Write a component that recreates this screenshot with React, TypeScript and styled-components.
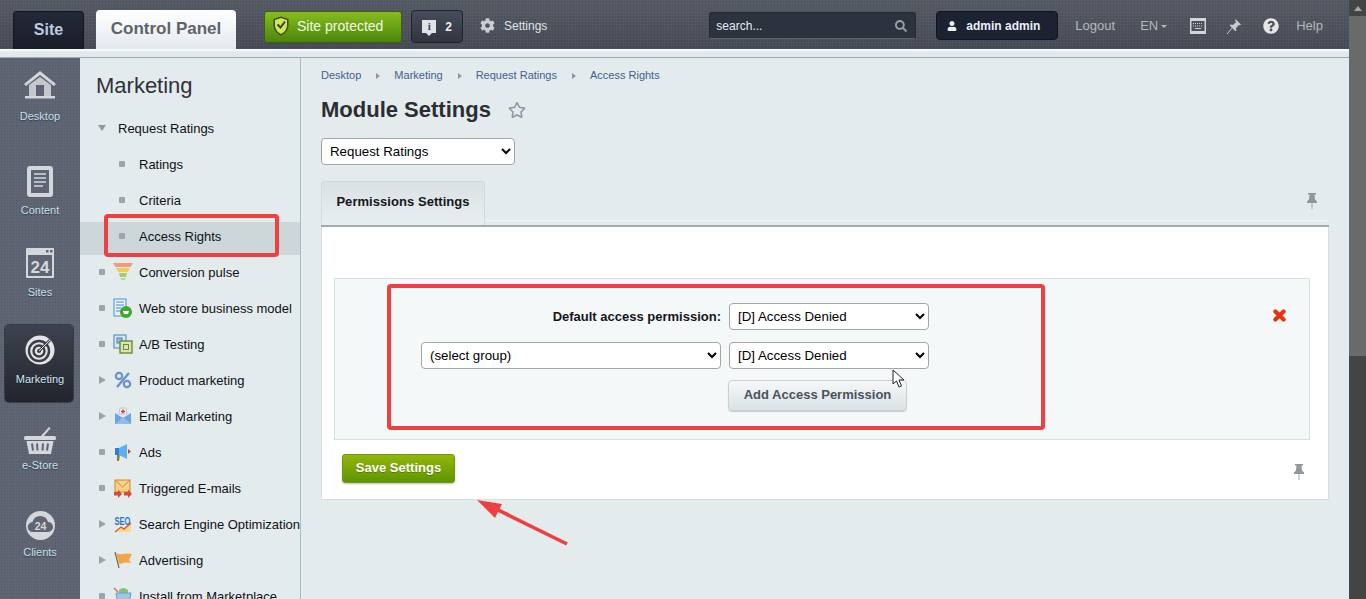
import styled, { createGlobalStyle } from 'styled-components'
import { FaUser, FaSearch, FaCog, FaQuestionCircle, FaRegStar } from 'react-icons/fa'

const GlobalStyle = createGlobalStyle`
  html, body {
    margin: 0;
    height: 100%;
    overflow: hidden;
    font-family: "Liberation Sans", Arial, sans-serif;
  }
  #root { height: 100%; }
`

const HomeIcon = () => (
  <svg width="34" height="30" viewBox="0 0 34 30">
    <path d="M17 1 L33 14 L31 16 L17 5 L3 16 L1 14 Z" fill="#d3d6da" />
    <path d="M6 15 L17 7 L28 15 V26 H21 V15 H13 V26 H6 Z" fill="#c4c7cc" />
    <rect x="2" y="26" width="30" height="2.5" fill="#d3d6da" />
  </svg>
)
const DocIcon = () => (
  <svg width="28" height="33" viewBox="0 0 28 33">
    <rect x="1" y="1" width="26" height="31" rx="3" fill="#d4d7db" />
    <rect x="5" y="5" width="18" height="23" fill="#5f6573" />
    <path d="M8 9h12M8 13h12M8 17h12M8 21h9" stroke="#d4d7db" strokeWidth="1.6" />
  </svg>
)
const CalIcon = () => (
  <svg width="28" height="30" viewBox="0 0 28 30">
    <rect width="28" height="30" rx="1" fill="#d4d7db" />
    <rect x="2" y="7" width="24" height="21" fill="#5f6573" />
    <rect x="20" y="2" width="2.5" height="2.5" fill="#5f6573" />
    <rect x="24" y="2" width="2.5" height="2.5" fill="#5f6573" />
    <text x="14" y="25" fontFamily="Liberation Sans" fontWeight="700" fontSize="17" textAnchor="middle" fill="#d4d7db">24</text>
  </svg>
)
const TargetIcon = () => (
  <svg width="30" height="30" viewBox="0 0 30 30">
    <circle cx="15" cy="15" r="14.5" fill="#e4e4e4" />
    <circle cx="14" cy="16" r="10" fill="none" stroke="#3a3e48" strokeWidth="2.4" />
    <circle cx="14" cy="16" r="5.5" fill="none" stroke="#3a3e48" strokeWidth="2.4" />
    <circle cx="14" cy="16" r="2" fill="#3a3e48" />
    <path d="M14 16 L25 5" stroke="#3a3e48" strokeWidth="2.6" />
    <path d="M14 16 L25 5" stroke="#e4e4e4" strokeWidth="1" />
  </svg>
)
const BasketIcon = () => (
  <svg width="32" height="29" viewBox="0 0 32 29">
    <path d="M16 11 L25 1 L26.5 2.2 L19 11" fill="#d4d7db" />
    <rect y="10" width="32" height="4" rx="1.5" fill="#d4d7db" />
    <path d="M2.5 15 H29.5 L27 28 H5 Z" fill="#d4d7db" />
    <path d="M8 17.5l1 7M13 17.5l.5 7M19 17.5l-.5 7M24 17.5l-1 7" stroke="#5f6573" strokeWidth="2" />
  </svg>
)
const CloudIcon = () => (
  <svg width="29" height="29" viewBox="0 0 29 29">
    <circle cx="14.5" cy="14.5" r="14.5" fill="#d4d7db" />
    <path d="M7 21 a5 5 0 0 1 -.5 -10 a8 8 0 0 1 15.5 0 a5 5 0 0 1 0 10 Z" fill="#5f6573" />
    <text x="14.5" y="19" fontFamily="Liberation Sans" fontWeight="700" fontSize="10.5" textAnchor="middle" fill="#d4d7db">24</text>
  </svg>
)

const FunnelIcon = () => (
  <svg width="20" height="20" viewBox="0 0 20 20">
    <path d="M0 1 H20 L17.5 5 H2.5 Z" fill="#f09a80" />
    <path d="M3 6 H17 L14.5 10 H5.5 Z" fill="#f3c75c" />
    <path d="M6 11 H14 L13 15 H7 Z" fill="#a6cf62" />
    <path d="M7.5 16 H12.5 L12 18 H8 Z" fill="#b9d6a0" />
  </svg>
)
const StoreIcon = () => (
  <svg width="20" height="20" viewBox="0 0 20 20">
    <rect x="1" y="1" width="12" height="17" fill="#e9f3fb" stroke="#3f8fd6" />
    <path d="M3 4h8M3 7h8M3 10h5M3 13h5" stroke="#3f8fd6" />
    <circle cx="13" cy="14" r="6" fill="#43a82f" />
    <path d="M10 13h6l-1 3h-4Z" fill="#fff" />
  </svg>
)
const AbIcon = () => (
  <svg width="20" height="20" viewBox="0 0 20 20">
    <rect x="1" y="1" width="12" height="13" fill="#d7e7f6" stroke="#4a7fb8" />
    <rect x="4" y="4" width="5" height="5" fill="#9ec0e2" stroke="#4a7fb8" />
    <rect x="7" y="7" width="12" height="12" fill="#dbe3b8" stroke="#6d8a2e" strokeWidth="1.4" />
    <rect x="10.5" y="10.5" width="5" height="5" fill="none" stroke="#6d8a2e" />
  </svg>
)
const PercentIcon = () => (
  <svg width="18" height="18" viewBox="0 0 18 18">
    <circle cx="5" cy="5" r="3.2" fill="none" stroke="#6c93c8" strokeWidth="2.2" />
    <circle cx="13" cy="13" r="3.2" fill="none" stroke="#6c93c8" strokeWidth="2.2" />
    <path d="M15 2 L3 16" stroke="#6c93c8" strokeWidth="2.4" />
  </svg>
)
const MailIcon = () => (
  <svg width="18" height="18" viewBox="0 0 18 18">
    <path d="M6 1h6l1 6H5Z" fill="#f4f4f4" stroke="#b9c6d4" />
    <path d="M9 2.5v4M7 4.5h4" stroke="#e0352a" strokeWidth="1.4" />
    <path d="M1 6 L9 11 L17 6 V17 H1 Z" fill="#6aa5e0" />
    <path d="M1 17 L9 10 L17 17" fill="#8fbdea" />
  </svg>
)
const MegaphoneIcon = () => (
  <svg width="18" height="20" viewBox="0 0 18 20">
    <path d="M3 12 L6 12 L5 19 H3 Z" fill="#9a7a2e" />
    <rect x="1" y="6" width="4" height="7" fill="#2f7fd0" />
    <path d="M5 6 L13 2 V17 L5 13 Z" fill="#5cb0ee" />
    <path d="M14 7 L17 9.5 L14 12 Z" fill="#e0352a" />
  </svg>
)
const TriggerIcon = () => (
  <svg width="19" height="19" viewBox="0 0 19 19">
    <rect x="1" y="1" width="15" height="12" fill="#f6d08a" stroke="#d08a36" />
    <path d="M1 1 L8.5 8 L16 1" fill="none" stroke="#d08a36" />
    <path d="M0 13h4v-2.5l4 4.5-4 4v-2.5H0Z" fill="#dc4a32" />
    <path d="M10 13h4v-2.5l4 4.5-4 4v-2.5h-4Z" fill="#dc4a32" />
  </svg>
)
const SeoIcon = () => (
  <svg width="18" height="18" viewBox="0 0 18 18">
    <path d="M1 17 L7 12 L10 14 L17 8 V17 Z" fill="#f6d98c" />
    <path d="M1 17 L7 12 L10 14 L17 8" fill="none" stroke="#dc5a28" strokeWidth="1.4" />
    <text x="0.5" y="10" fontFamily="Liberation Sans" fontWeight="700" fontSize="10" fill="#2f74c4" textLength="16" lengthAdjust="spacingAndGlyphs">SEO</text>
  </svg>
)
const FlagIcon = () => (
  <svg width="18" height="18" viewBox="0 0 18 18">
    <path d="M1 1 L5 17" stroke="#6e6a5e" strokeWidth="1.2" />
    <path d="M2 2 Q7 4 9 3 T18 3 L15 9 L17 12 Q11 11 9 12 T5 13 Z" fill="#f2a64a" />
  </svg>
)
const MarketIcon = () => (
  <svg width="20" height="20" viewBox="0 0 20 20">
    <path d="M1 2 L5 6" stroke="#d8706a" strokeWidth="1.6" />
    <path d="M6 4 Q10 0 15 4 V7 H6 Z" fill="#8fbf70" />
    <path d="M3 7 H18 L16 18 H5 Z" fill="#9cc7e8" stroke="#6a9cc6" />
  </svg>
)

const ShieldIcon = () => (
  <svg width="16" height="20" viewBox="0 0 16 20">
    <path d="M8 .5 L15.5 3 V10 Q15 16 8 19.5 Q1 16 .5 10 V3 Z" fill="#3e4a1c" />
    <path d="M8 2 L14 4 V10 Q13.5 15 8 18 Q2.5 15 2 10 V4 Z" fill="#cfe85a" />
    <path d="M4.5 8.5 L7.5 11.5 L12 5.5" fill="none" stroke="#39451a" strokeWidth="2" />
  </svg>
)

const KeyboardIcon = () => (
  <svg width="16" height="16" viewBox="0 0 16 16">
    <rect width="16" height="16" fill="#d2d4d6" />
    <rect x="1.5" y="3" width="13" height="10" fill="#4c515b" />
    <path d="M3 5.5h10M3 8h10" stroke="#d2d4d6" strokeDasharray="1 1" />
    <path d="M5 10.5h6" stroke="#d2d4d6" />
  </svg>
)

const SlantPinIcon = () => (
  <svg width="16" height="17" viewBox="0 0 16 17">
    <path d="M1 16 L6.5 9.5" stroke="#c6c9ce" strokeWidth="1" />
    <path d="M9.5 1 L15 6.5 L13.8 7.6 L12.8 7 L10 10.3 L10.4 12.5 L9.4 13.3 L3.7 7.6 L4.6 6.6 L6.8 7 L10 4.2 L9.2 2.6 Z" fill="#c6c9ce" />
  </svg>
)

const PinIcon = () => (
  <svg width="10" height="16" viewBox="0 0 10 16">
    <path d="M5 10 V16" stroke="#a2a9ae" strokeWidth="1" />
    <path d="M1 0 H9 V1.5 H7.5 L8 6.5 L10 8.5 V10 H0 V8.5 L2 6.5 L2.5 1.5 H1 Z" fill="#8f979d" />
  </svg>
)

const DeleteIcon = () => (
  <svg width="13" height="13" viewBox="0 0 13 13">
    <path d="M2.4 2.4 L10.6 10.6 M10.6 2.4 L2.4 10.6" stroke="#e8330f" strokeWidth="4.2" strokeLinecap="round" />
  </svg>
)

const railItems = [
  { label: 'Desktop', icon: <HomeIcon />, mt: 7, gap: 4 },
  { label: 'Content', icon: <DocIcon />, mt: 38, gap: 2 },
  { label: 'Sites', icon: <CalIcon />, mt: 26, gap: 2 },
  { label: 'Marketing', icon: <TargetIcon />, mt: 26, gap: 2, active: true },
  { label: 'e-Store', icon: <BasketIcon />, mt: 18, gap: -2 },
  { label: 'Clients', icon: <CloudIcon />, mt: 33, gap: 0 },
]

const menuItems = [
  { label: 'Conversion pulse', icon: <FunnelIcon /> },
  { label: 'Web store business model', icon: <StoreIcon /> },
  { label: 'A/B Testing', icon: <AbIcon /> },
  { label: 'Product marketing', icon: <PercentIcon />, arrow: true },
  { label: 'Email Marketing', icon: <MailIcon />, arrow: true },
  { label: 'Ads', icon: <MegaphoneIcon /> },
  { label: 'Triggered E-mails', icon: <TriggerIcon /> },
  { label: 'Search Engine Optimization', icon: <SeoIcon />, arrow: true },
  { label: 'Advertising', icon: <FlagIcon />, arrow: true },
  { label: 'Install from Marketplace', icon: <MarketIcon /> },
]

const crumbs = ['Desktop', 'Marketing', 'Request Ratings', 'Access Rights']

export default function App() {
  return (
    <Screen>
      <GlobalStyle />
      <Page>
        <Header>
          <SiteTab>Site</SiteTab>
          <PanelTab>Control Panel</PanelTab>
          <ProtectedButton>
            <ShieldIcon />
            Site protected
          </ProtectedButton>
          <NotifyButton>
            <NotifyGlyph>i</NotifyGlyph>2
          </NotifyButton>
          <SettingsLink>
            <FaCog size={15} color="#c9ccd0" />
            Settings
          </SettingsLink>
          <Search>
            search...
            <FaSearch size={12} color="#9a9ea5" />
          </Search>
          <UserBox>
            <FaUser size={10} color="#f0f0f0" />
            admin admin
          </UserBox>
          <HeadLink $ml={17}>Logout</HeadLink>
          <HeadLink $ml={25}>
            EN <Caret />
          </HeadLink>
          <HeadIcon $ml={23}>
            <KeyboardIcon />
          </HeadIcon>
          <HeadIcon $ml={20}>
            <SlantPinIcon />
          </HeadIcon>
          <HeadIcon $ml={21}>
            <FaQuestionCircle size={16} color="#e6e6e6" />
          </HeadIcon>
          <HeadLink $ml={17}>Help</HeadLink>
        </Header>
        <SubBand />
        <Body>
          <Rail>
            {railItems.map((item) => (
              <RailItem key={item.label} $mt={item.mt} $active={item.active}>
                <RailIcon>{item.icon}</RailIcon>
                <RailLabel $gap={item.gap} $active={item.active}>
                  {item.label}
                </RailLabel>
              </RailItem>
            ))}
          </Rail>
          <Sidebar>
            <SidebarTitle>Marketing</SidebarTitle>
            <MenuRow $pad={18}>
              <DownTriangle />
              <MenuLabel $ml={12}>Request Ratings</MenuLabel>
            </MenuRow>
            <MenuRow $pad={39}>
              <Bullet />
              <MenuLabel $ml={14}>Ratings</MenuLabel>
            </MenuRow>
            <MenuRow $pad={39}>
              <Bullet />
              <MenuLabel $ml={14}>Criteria</MenuLabel>
            </MenuRow>
            <MenuRow $pad={39} $selected>
              <Bullet />
              <MenuLabel $ml={14}>Access Rights</MenuLabel>
              <RedMark />
            </MenuRow>
            {menuItems.map((item) => (
              <MenuRow key={item.label} $pad={19}>
                {item.arrow ? <RightTriangle /> : <Bullet />}
                <MenuIcon>{item.icon}</MenuIcon>
                <MenuLabel>{item.label}</MenuLabel>
              </MenuRow>
            ))}
          </Sidebar>
          <Content>
            <Breadcrumbs>
              {crumbs.map((c, i) => (
                <Crumb key={c} $last={i === crumbs.length - 1}>
                  {c}
                </Crumb>
              ))}
            </Breadcrumbs>
            <TitleRow>
              <Title>Module Settings</Title>
              <FaRegStar size={18} color="#8c96a3" />
            </TitleRow>
            <ModuleSelect>
              <option>Request Ratings</option>
            </ModuleSelect>
            <TabBar>
              <Tab>Permissions Settings</Tab>
              <TabPin>
                <PinIcon />
              </TabPin>
            </TabBar>
            <Panel>
              <Permissions>
                <RedBox>
                  <PermRow>
                    <PermLabel>Default access permission:</PermLabel>
                    <AccessSelect>
                      <option>[D] Access Denied</option>
                    </AccessSelect>
                  </PermRow>
                  <PermRow>
                    <GroupSelect>
                      <option>(select group)</option>
                    </GroupSelect>
                    <AccessSelect>
                      <option>[D] Access Denied</option>
                    </AccessSelect>
                  </PermRow>
                  <AddButton>Add Access Permission</AddButton>
                  <Pointer viewBox="0 0 14 20" width="14" height="20">
                    <path d="M1 1 V15 L4.5 12 L7 18 L9.5 17 L7 11 H12 Z" fill="#fff" stroke="#222" strokeWidth="1" />
                  </Pointer>
                </RedBox>
                <DeleteMark>
                  <DeleteIcon />
                </DeleteMark>
              </Permissions>
              <PanelFooter>
                <SaveButton>Save Settings</SaveButton>
                <FooterPin>
                  <PinIcon />
                </FooterPin>
                <Arrow viewBox="0 0 100 60" width="100" height="60">
                  <path d="M91 51 L16 14" stroke="#ee4040" strokeWidth="3.6" />
                  <path d="M1 7 L26 11 L19 25 Z" fill="#ee4040" />
                </Arrow>
              </PanelFooter>
            </Panel>
          </Content>
        </Body>
      </Page>
      <Scrollbar>
        <ScrollArrow />
        <ScrollThumb />
      </Scrollbar>
    </Screen>
  )
}

const Screen = styled.div`
  display: flex;
  height: 599px;
  overflow: hidden;
`

const Page = styled.div`
  flex: 1;
  min-width: 0;
  display: flex;
  flex-direction: column;
`

const Scrollbar = styled.div`
  width: 17px;
  background: #444444;
  display: flex;
  flex-direction: column;
  align-items: center;
`

const ScrollArrow = styled.div`
  margin: 6px 0 5px;
  border: 4px solid transparent;
  border-top: 0;
  border-bottom: 5px solid #a8a8a8;
  width: 0;
  height: 0;
`

const ScrollThumb = styled.div`
  width: 100%;
  height: 340px;
  background: #6a6a6a;
`

const Header = styled.div`
  height: 49px;
  flex: none;
  display: flex;
  align-items: flex-start;
  padding-left: 13px;
  background-color: #4c515b;
  background-image:
    repeating-linear-gradient(0deg, rgba(255, 255, 255, 0.035) 0 1px, transparent 1px 3px),
    repeating-linear-gradient(90deg, rgba(0, 0, 0, 0.05) 0 1px, transparent 1px 3px),
    linear-gradient(#555a64, #464b55);
`

const SiteTab = styled.div`
  width: 71px;
  height: 38px;
  margin-top: 11px;
  box-sizing: border-box;
  border: 1px solid #14171f;
  border-bottom: 0;
  border-radius: 4px 4px 0 0;
  background: linear-gradient(#232836, #1a1e2a);
  color: #b9cde0;
  font-size: 16px;
  font-weight: 700;
  text-align: center;
  line-height: 35px;
`

const PanelTab = styled.div`
  width: 140px;
  height: 39px;
  margin: 10px 0 0 12px;
  border-radius: 4px 4px 0 0;
  background: linear-gradient(#ffffff, #e3eaed);
  color: #5f6369;
  font-size: 17px;
  font-weight: 700;
  text-align: center;
  line-height: 37px;
`

const ProtectedButton = styled.div`
  width: 138px;
  height: 32px;
  margin: 11px 0 0 28px;
  box-sizing: border-box;
  padding: 0 0 3px 8px;
  display: flex;
  align-items: center;
  gap: 8px;
  border: 1px solid #3f5f12;
  border-radius: 3px;
  background: linear-gradient(#86bd1e, #4c860a);
  color: #f4f8e8;
  font-size: 14px;
`

const NotifyButton = styled.div`
  width: 52px;
  height: 33px;
  margin: 10px 0 0 9px;
  box-sizing: border-box;
  display: flex;
  align-items: center;
  justify-content: center;
  gap: 9px;
  border: 1px solid #20232b;
  border-radius: 4px;
  background: linear-gradient(#474c5b, #31353f);
  color: #f0f0f0;
  font-size: 12px;
  font-weight: 700;
`

const NotifyGlyph = styled.span`
  position: relative;
  width: 14px;
  height: 13px;
  background: #e0e3e6;
  color: #3b3f4d;
  font: 700 11px/13px "Liberation Serif", serif;
  text-align: center;

  &::after {
    content: '';
    position: absolute;
    left: 4px;
    bottom: -3px;
    border: 3px solid transparent;
    border-top: 3px solid #e0e3e6;
    border-bottom: 0;
  }
`

const SettingsLink = styled.div`
  margin: 18px 0 0 17px;
  display: flex;
  align-items: center;
  gap: 9px;
  color: #dfe3e8;
  font-size: 12px;
`

const Search = styled.div`
  width: 207px;
  height: 27px;
  margin: 12px 0 0 162px;
  box-sizing: border-box;
  padding: 0 8px 0 6px;
  display: flex;
  align-items: center;
  justify-content: space-between;
  border: 1px solid #252932;
  border-bottom-color: #5c606a;
  border-radius: 3px;
  background: #2d323f;
  color: #e6eaf0;
  font-size: 12px;
`

const UserBox = styled.div`
  width: 122px;
  height: 29px;
  margin: 11px 0 0 20px;
  box-sizing: border-box;
  padding-left: 10px;
  display: flex;
  align-items: center;
  gap: 9px;
  border: 1px solid #12151d;
  border-radius: 4px;
  background: #1c2232;
  color: #eaf0f6;
  font-size: 12px;
  font-weight: 700;
`

const HeadLink = styled.div<{ $ml: number }>`
  margin: 19px 0 0 ${(p) => p.$ml}px;
  display: flex;
  align-items: center;
  gap: 3px;
  color: #b3b7bd;
  font-size: 13px;
  line-height: 14px;
`

const Caret = styled.span`
  border: 3px solid transparent;
  border-top: 3px solid #b3b7bd;
  border-bottom: 0;
`

const HeadIcon = styled.div<{ $ml: number }>`
  margin: 17px 0 0 ${(p) => p.$ml}px;
  height: 18px;
  display: flex;
  align-items: center;
  color: #c6c9ce;
`

const SubBand = styled.div`
  height: 8px;
  flex: none;
  background: linear-gradient(#ffffff 0, #e2e9ec 40%);
  border-bottom: 1px solid #a3abae;
`

const Body = styled.div`
  flex: 1;
  min-height: 0;
  display: flex;
  overflow: hidden;
`

const Rail = styled.div`
  width: 80px;
  flex: none;
  background-color: #5f6573;
  background-image: radial-gradient(rgba(0, 0, 0, 0.12) 0.6px, transparent 0.8px);
  background-size: 3px 3px;
`

const RailItem = styled.div<{ $mt: number; $active?: boolean }>`
  width: 68px;
  margin: ${(p) => p.$mt}px 0 0 5px;
  box-sizing: border-box;
  padding: ${(p) => (p.$active ? '5px 0 16px 2px' : '0 0 0 2px')};
  border-radius: 4px;
  ${(p) =>
    p.$active
      ? `
    background: linear-gradient(#3d424e, #22252d);
    box-shadow: 0 0 0 1px rgba(20, 22, 28, 0.5);
  `
      : ''}
`

const RailIcon = styled.div`
  height: 40px;
  display: flex;
  align-items: center;
  justify-content: center;
`

const RailLabel = styled.div<{ $gap: number; $active?: boolean }>`
  margin-top: ${(p) => p.$gap}px;
  color: ${(p) => (p.$active ? '#cfe6f4' : '#c6e0ee')};
  font-size: 11px;
  line-height: 14px;
  text-align: center;
  text-shadow: 0 1px 1px rgba(0, 0, 0, 0.4);
`

const Sidebar = styled.div`
  width: 220px;
  flex: none;
  border-right: 1px solid #a9bccb;
  background: #e4ebed;
  overflow: hidden;
`

const SidebarTitle = styled.div`
  margin: 15px 0 0 16px;
  height: 37px;
  color: #2e3138;
  font-size: 22px;
  line-height: 25px;
`

const MenuRow = styled.div<{ $pad: number; $selected?: boolean }>`
  position: relative;
  height: 36px;
  padding-left: ${(p) => p.$pad}px;
  display: flex;
  align-items: center;
  ${(p) =>
    p.$selected
      ? `
    background: linear-gradient(transparent 4px, #cdd7da 4px);
    box-shadow: 0 1px 0 #cdd7da;
  `
      : ''}
`

const MenuLabel = styled.div<{ $ml?: number }>`
  margin-left: ${(p) => p.$ml ?? 0}px;
  color: #0f1115;
  font-size: 13px;
  white-space: nowrap;
`

const MenuIcon = styled.div`
  width: 20px;
  margin: 0 6px 0 8px;
  display: flex;
  justify-content: center;
`

const Bullet = styled.span`
  width: 6px;
  height: 6px;
  flex: none;
  border-radius: 1px;
  background: #9aa5ae;
`

const DownTriangle = styled.span`
  flex: none;
  border: 4px solid transparent;
  border-top: 6px solid #8d98a3;
  border-bottom: 0;
`

const RightTriangle = styled.span`
  flex: none;
  margin-right: -1px;
  border: 4px solid transparent;
  border-left: 7px solid #98a3ad;
  border-right: 0;
`

const RedMark = styled.span`
  position: absolute;
  left: 24px;
  top: -4px;
  width: 175px;
  height: 43px;
  box-sizing: border-box;
  border: 4px solid #ee4040;
  border-radius: 4px;
`

const Content = styled.div`
  flex: 1;
  min-width: 0;
  padding: 11px 20px 0 20px;
  background: #e4ebed;
`

const Breadcrumbs = styled.div`
  display: flex;
  height: 13px;
  line-height: 13px;
`

const Crumb = styled.span<{ $last: boolean }>`
  display: flex;
  align-items: center;
  color: #3f618f;
  font-size: 11px;
  ${(p) =>
    p.$last
      ? ''
      : `
    &::after {
      content: '';
      margin: 0 14px 0 15px;
      border: 3.5px solid transparent;
      border-left: 4px solid #8f979e;
      border-right: 0;
    }
  `}
`

const TitleRow = styled.div`
  margin-top: 15px;
  height: 25px;
  display: flex;
  align-items: center;
  gap: 17px;
`

const Title = styled.h1`
  margin: 0;
  color: #2b2d33;
  font-size: 22px;
  line-height: 25px;
  font-weight: 700;
`

const NativeSelect = styled.select`
  box-sizing: border-box;
  height: 27px;
  padding-left: 4px;
  border: 1px solid #a5a5a5;
  border-radius: 4px;
  background: #fff;
  color: #000;
  font-family: "Liberation Sans", Arial, sans-serif;
  font-size: 13.3px;
`

const ModuleSelect = styled(NativeSelect)`
  display: block;
  width: 194px;
  margin-top: 16px;
`

const TabBar = styled.div`
  position: relative;
  margin-top: 16px;
  height: 46px;
  box-sizing: border-box;
  border-bottom: 2px solid #a3abae;
  background: linear-gradient(transparent 39px, #fff 39px, #e4ebed 40px);
`

const Tab = styled.div`
  width: 164px;
  height: 44px;
  box-sizing: border-box;
  padding-top: 12px;
  border: 1px solid #d2dadd;
  border-bottom: 0;
  border-radius: 3px 3px 0 0;
  background: linear-gradient(#dae1e4, #e9eff0);
  color: #14161a;
  font-size: 13px;
  font-weight: 700;
  line-height: 16px;
  text-align: center;
  letter-spacing: 0.05px;
`

const TabPin = styled.div`
  position: absolute;
  right: 12px;
  top: 12px;
`

const Panel = styled.div`
  box-sizing: border-box;
  height: 273px;
  padding: 51px 18px 0 12px;
  border: 1px solid #d6dee0;
  border-top: 0;
  background: #fff;
`

const Permissions = styled.div`
  height: 162px;
  box-sizing: border-box;
  padding: 5px 0 0 52px;
  display: flex;
  border: 1px solid #d9e0e2;
  background: #f5f8f9;
`

const RedBox = styled.div`
  position: relative;
  width: 658px;
  height: 146px;
  box-sizing: border-box;
  padding: 15px 0 0 30px;
  border: 4px solid #ee4040;
  border-radius: 4px;
`

const PermRow = styled.div`
  height: 27px;
  margin-bottom: 12px;
  display: flex;
  justify-content: flex-end;
  align-items: center;
  gap: 8px;
  width: 508px;
`

const PermLabel = styled.div`
  color: #14161a;
  font-size: 13px;
  font-weight: 700;
`

const AccessSelect = styled(NativeSelect)`
  width: 200px;
`

const GroupSelect = styled(NativeSelect)`
  width: 300px;
`

const AddButton = styled.div`
  width: 179px;
  height: 31px;
  margin: -1px 0 0 307px;
  box-sizing: border-box;
  border: 1px solid #c9d1d4;
  border-radius: 4px;
  background: linear-gradient(#f6f8f9, #d9e2e5);
  box-shadow: 0 1px 1px rgba(0, 0, 0, 0.18);
  color: #4b525c;
  font-size: 13px;
  font-weight: 700;
  line-height: 27px;
  text-align: center;
`

const Pointer = styled.svg`
  position: absolute;
  left: 501px;
  top: 81px;
`

const DeleteMark = styled.div`
  margin: 24px 23px 0 auto;
  height: 13px;
`

const PanelFooter = styled.div`
  position: relative;
  display: flex;
  justify-content: space-between;
  align-items: center;
  padding: 14px 6px 0 8px;
`

const FooterPin = styled.div`
  height: 16px;
  margin-top: 6px;
`

const SaveButton = styled.div`
  width: 113px;
  height: 29px;
  box-sizing: border-box;
  border-radius: 3px;
  border: 1px solid #6f9a0a;
  background: linear-gradient(#93b60a, #5f9500);
  box-shadow: 0 1px 2px rgba(0, 0, 0, 0.25);
  color: #fff;
  font-size: 13px;
  font-weight: 700;
  line-height: 25px;
  text-align: center;
  text-shadow: 0 1px 0 rgba(0, 0, 0, 0.25);
`

const Arrow = styled.svg`
  position: absolute;
  left: 142px;
  top: 53px;
`
